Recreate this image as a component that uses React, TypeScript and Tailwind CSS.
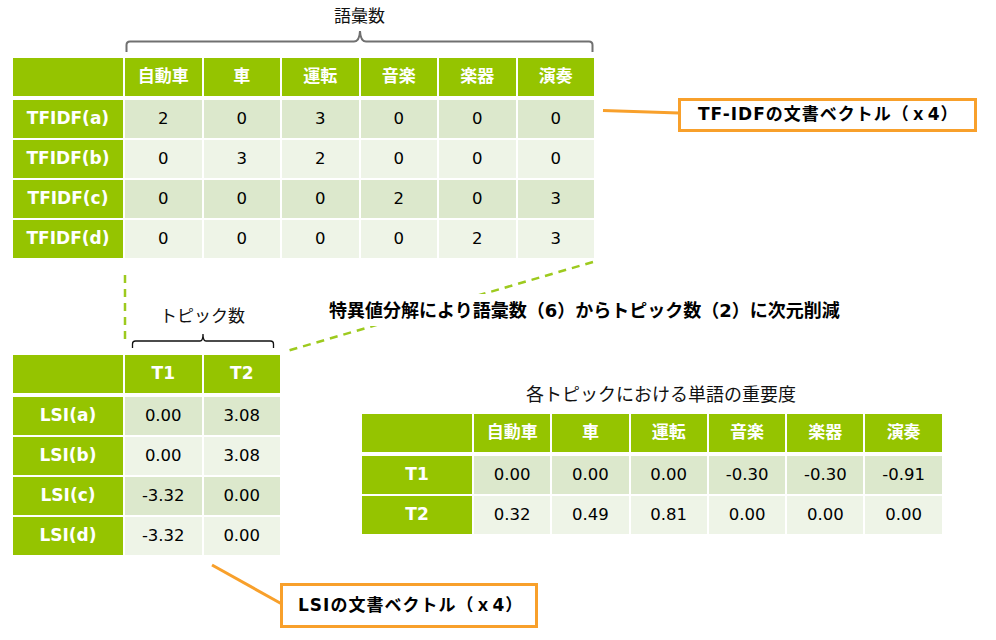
import { Fragment } from 'react';

type Row = { label: string; values: string[] };

interface TableProps {
    cols: string;
    headers: string[];
    rows: Row[];
}

// green header row + banded body, cells separated by white gaps
function MatrixTable({ cols, headers, rows }: TableProps) {
    return (
        <div className="flex flex-col gap-[4px]">
            <div className={`grid ${cols} gap-x-[2px] h-[38px]`}>
                <div className="bg-[#95c400]" />
                {headers.map((h) => (
                    <div key={h} className="bg-[#95c400] flex items-center justify-center text-white font-bold text-[17px]">
                        {h}
                    </div>
                ))}
            </div>
            <div className={`grid ${cols} gap-[2px] auto-rows-[38px]`}>
                {rows.map((r, i) => (
                    <Fragment key={r.label}>
                        <div className="bg-[#95c400] flex items-center justify-center text-white font-bold text-[17px]">
                            {r.label}
                        </div>
                        {r.values.map((v, j) => (
                            <div
                                key={j}
                                className={`flex items-center justify-center text-[16.5px] text-black ${i % 2 === 0 ? 'bg-[#dce8cc]' : 'bg-[#eef4e7]'}`}
                            >
                                {v}
                            </div>
                        ))}
                    </Fragment>
                ))}
            </div>
        </div>
    );
}

const words = ['自動車', '車', '運転', '音楽', '楽器', '演奏'];

const tfidfRows: Row[] = [
    { label: 'TFIDF(a)', values: ['2', '0', '3', '0', '0', '0'] },
    { label: 'TFIDF(b)', values: ['0', '3', '2', '0', '0', '0'] },
    { label: 'TFIDF(c)', values: ['0', '0', '0', '2', '0', '3'] },
    { label: 'TFIDF(d)', values: ['0', '0', '0', '0', '2', '3'] },
];

const lsiRows: Row[] = [
    { label: 'LSI(a)', values: ['0.00', '3.08'] },
    { label: 'LSI(b)', values: ['0.00', '3.08'] },
    { label: 'LSI(c)', values: ['-3.32', '0.00'] },
    { label: 'LSI(d)', values: ['-3.32', '0.00'] },
];

const topicRows: Row[] = [
    { label: 'T1', values: ['0.00', '0.00', '0.00', '-0.30', '-0.30', '-0.91'] },
    { label: 'T2', values: ['0.32', '0.49', '0.81', '0.00', '0.00', '0.00'] },
];

export default function App() {
    return (
        <div className="relative w-[996px] h-[640px] bg-white overflow-hidden text-black [font-family:'DejaVu_Sans','Noto_Sans_CJK_JP',sans-serif]">
            <div className="pl-[13px] pt-[3px]">
                {/* vocabulary brace */}
                <div className="ml-[112px] w-[469px]">
                    <div className="h-[26px] leading-[26px] text-center text-[17px] text-[#111]">語彙数</div>
                    <svg width="469" height="29" className="block">
                        <path
                            d="M1.5 23 L1.5 16 Q1.5 12.5 5 12.5 L229 12.5 Q234.5 12.5 235 2 Q235.5 12.5 241 12.5 L464 12.5 Q467.5 12.5 467.5 16 L467.5 23"
                            fill="none"
                            stroke="#707070"
                            strokeWidth="2"
                        />
                    </svg>
                </div>

                <MatrixTable cols="grid-cols-[110px_repeat(6,76.5px)]" headers={words} rows={tfidfRows} />

                <div className="mt-[45px] flex items-start">
                    <div>
                        <div className="ml-[112px] w-[155px]">
                            <div className="h-[26px] leading-[26px] text-center text-[17px] text-[#111]">トピック数</div>
                            <svg width="155" height="26" className="block">
                                <path
                                    d="M7.5 19 L7.5 15 Q7.5 12 10.5 12 L75 12 Q78 12 78 5 Q78 12 81 12 L145.5 12 Q148.5 12 148.5 15 L148.5 19"
                                    fill="none"
                                    stroke="#111"
                                    strokeWidth="1.3"
                                />
                            </svg>
                        </div>
                        <MatrixTable cols="grid-cols-[110px_repeat(2,76.5px)]" headers={['T1', 'T2']} rows={lsiRows} />
                    </div>

                    <div className="ml-[82px] mt-[79px]">
                        <div className="h-[26px] leading-[26px] mb-[6px] pl-[18px] text-center text-[18px] text-[#111]">
                            各トピックにおける単語の重要度
                        </div>
                        <MatrixTable cols="grid-cols-[110px_repeat(6,76.3px)]" headers={words} rows={topicRows} />
                    </div>
                </div>
            </div>

            {/* connector lines */}
            <svg width="996" height="640" className="absolute inset-0 pointer-events-none">
                <g stroke="#9dca1e" strokeWidth="2.5" strokeDasharray="8 6" fill="none">
                    <line x1="125" y1="275" x2="125" y2="340" />
                    <line x1="593" y1="262" x2="287" y2="351" />
                </g>
                <g stroke="#f8a02b" strokeWidth="3" fill="none">
                    <line x1="603" y1="110.5" x2="679" y2="113" />
                    <line x1="212" y1="565" x2="281" y2="603.5" />
                </g>
            </svg>

            <div className="absolute left-[320px] top-[294px] h-[32px] px-[9px] bg-white flex items-center font-bold text-[18px] whitespace-nowrap">
                特異値分解により語彙数（6）からトピック数（2）に次元削減
            </div>

            <div className="absolute left-[678px] top-[98px] w-[299px] h-[34px] border-[3px] border-[#f8a02b] bg-white flex items-center pl-[17px] font-bold text-[17px] tracking-[1px] whitespace-nowrap">
                TF-IDFの文書ベクトル（ｘ4）
            </div>

            <div className="absolute left-[280px] top-[583px] w-[258px] h-[45px] border-[3px] border-[#f8a02b] bg-white flex items-center pl-[15px] font-bold text-[17px] tracking-[1px] whitespace-nowrap">
                LSIの文書ベクトル（ｘ4）
            </div>
        </div>
    );
}
